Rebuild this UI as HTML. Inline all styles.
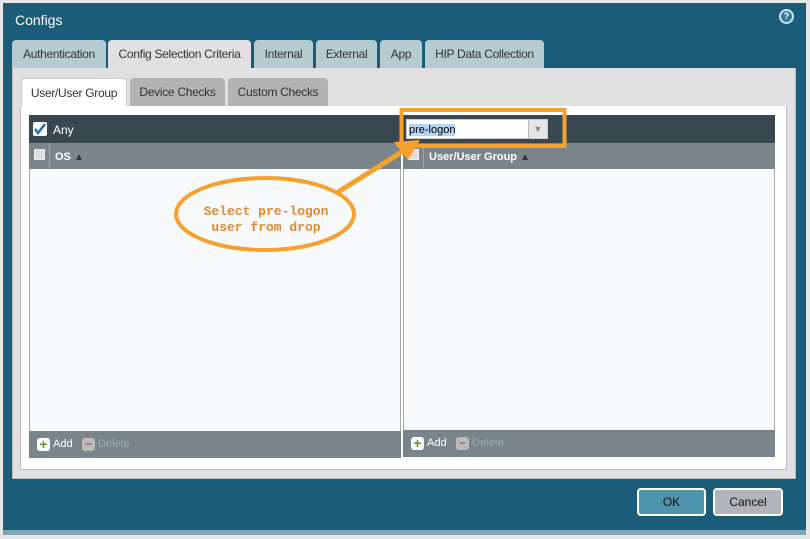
<!DOCTYPE html>
<html><head><style>
*{margin:0;padding:0;box-sizing:border-box}
body{width:810px;height:539px;background:#e6e6e6;font-family:"Liberation Sans",sans-serif;position:relative;overflow:hidden}
.a{position:absolute}
.tab{position:absolute;top:40px;height:28px;background:#b6cbd0;border-radius:4px 4px 0 0;font-size:12px;color:#333;text-align:center;line-height:28px;letter-spacing:-0.3px}
.st{position:absolute;top:78px;height:28px;background:#b3b3b3;border-radius:4px 4px 0 0;font-size:12px;color:#333;text-align:center;line-height:28px;letter-spacing:-0.3px}
.cb{position:absolute;width:11px;height:11px;background:#ddd;border:1px solid #eee}
.ft{font-size:11px;color:#fff}
</style></head><body>
<div class="a" style="left:3px;top:3px;width:803px;height:528px;background:#1b5d79"></div>
<div class="a" style="left:3px;top:530px;width:803px;height:5px;background:#7fa6b6"></div>
<div class="a" style="left:15px;top:12px;color:#fff;font-size:14px">Configs</div>
<div class="a" style="left:779px;top:9px;width:15px;height:15px;border-radius:50%;background:#2a7ab0;border:2px solid #cfe3ee;color:#fff;font-size:9px;font-weight:bold;text-align:center;line-height:11px">?</div>
<div class="tab" style="left:12px;width:94px">Authentication</div>
<div class="tab" style="left:108px;width:143px;background:#e0e0e0">Config Selection Criteria</div>
<div class="tab" style="left:254px;width:59px">Internal</div>
<div class="tab" style="left:316px;width:61px">External</div>
<div class="tab" style="left:380px;width:42px">App</div>
<div class="tab" style="left:425px;width:119px">HIP Data Collection</div>
<div class="a" style="left:12px;top:68px;width:784px;height:411px;background:#e0e0e0;border:1px solid #bbb;border-top:none"></div>
<div class="st" style="left:21px;width:106px;background:#fff;border:1px solid #ccc;border-bottom:none">User/User Group</div>
<div class="st" style="left:130px;width:95px">Device Checks</div>
<div class="st" style="left:228px;width:100px">Custom Checks</div>
<div class="a" style="left:20px;top:106px;width:767px;height:364px;background:#fff;border:1px solid #bbb;border-top:none"></div>
<div class="a" style="left:29px;top:115px;width:746px;height:28px;background:#39474f"></div>
<div class="a" style="left:33px;top:122px;width:14px;height:14px;background:#fff;border-radius:2px"><svg width="14" height="14"><path d="M2 7l3 4 7-9" stroke="#1d6fb0" stroke-width="2.5" fill="none"/></svg></div>
<div class="a ft" style="left:53px;top:123px;font-size:12px">Any</div>
<div class="a" style="left:29px;top:143px;width:372px;height:315px;background:#f8f9fb;border:1px solid #aaa"></div>
<div class="a" style="left:29px;top:143px;width:372px;height:26px;background:#7a858b"></div>
<div class="cb" style="left:34px;top:149px"></div>
<div class="a" style="left:49px;top:143px;width:1px;height:26px;background:#9aa"></div>
<div class="a ft" style="left:55px;top:151px;font-weight:bold">OS <span style="color:#333;font-size:10px">▲</span></div>
<div class="a" style="left:29px;top:431px;width:372px;height:27px;background:#7a858b"></div>
<div class="a" style="left:403px;top:143px;width:372px;height:314px;background:#f8f9fb;border:1px solid #aaa"></div>
<div class="a" style="left:403px;top:143px;width:372px;height:26px;background:#7a858b"></div>
<div class="cb" style="left:408px;top:149px"></div>
<div class="a" style="left:423px;top:143px;width:1px;height:26px;background:#9aa"></div>
<div class="a ft" style="left:429px;top:151px;font-weight:bold">User/User Group <span style="color:#333;font-size:10px">▲</span></div>
<div class="a" style="left:403px;top:430px;width:372px;height:27px;background:#7a858b"></div>
<div class="a" style="left:406px;top:119px;width:142px;height:20px;background:#fff;border:1px solid #ccc"></div>
<div class="a" style="left:409px;top:124px;font-size:11px;background:#b4d5f5;color:#000;line-height:12px">pre-logon</div>
<div class="a" style="left:528px;top:120px;width:19px;height:18px;background:#e6e6e6;border-left:1px solid #bbb;color:#888;font-size:9px;text-align:center;line-height:18px">▼</div>
<div class="a" style="left:37px;top:438px;width:13px;height:13px;background:#fff;border-radius:3px;color:#5a9a20;font-weight:bold;font-size:14px;line-height:12px;text-align:center">+</div>
<div class="a ft" style="left:53px;top:438px">Add</div>
<div class="a" style="left:82px;top:438px;width:13px;height:13px;background:#bbb;border-radius:3px;color:#7a3a3a;font-size:12px;line-height:12px;text-align:center">−</div>
<div class="a" style="left:98px;top:438px;font-size:11px;color:#9aa">Delete</div>
<div class="a" style="left:411px;top:437px;width:13px;height:13px;background:#fff;border-radius:3px;color:#5a9a20;font-weight:bold;font-size:14px;line-height:12px;text-align:center">+</div>
<div class="a ft" style="left:427px;top:437px">Add</div>
<div class="a" style="left:456px;top:437px;width:13px;height:13px;background:#bbb;border-radius:3px;color:#7a3a3a;font-size:12px;line-height:12px;text-align:center">−</div>
<div class="a" style="left:472px;top:437px;font-size:11px;color:#9aa">Delete</div>
<div class="a" style="left:637px;top:488px;width:69px;height:28px;background:#4f93ad;border:2px solid #fff;border-radius:4px;font-size:12px;text-align:center;line-height:24px;color:#111">OK</div>
<div class="a" style="left:713px;top:488px;width:70px;height:28px;background:#b1b5b9;border:2px solid #fff;border-radius:4px;font-size:12px;text-align:center;line-height:24px;color:#111">Cancel</div>
<svg class="a" style="left:0;top:0" width="810" height="539">
<rect x="401.5" y="110" width="163" height="36" fill="none" stroke="#f6a02e" stroke-width="4"/>
<line x1="338" y1="192" x2="405" y2="150" stroke="#f6a02e" stroke-width="5"/>
<polygon points="420,140 394,142 408,160" fill="#f6a02e"/>
<ellipse cx="265" cy="214" rx="89" ry="36" fill="none" stroke="#f6a02e" stroke-width="4"/>
<text x="266" y="215" font-family="Liberation Mono" font-size="13" font-weight="bold" fill="#e38a2a" text-anchor="middle">Select pre-logon</text>
<text x="266" y="231" font-family="Liberation Mono" font-size="13" font-weight="bold" fill="#e38a2a" text-anchor="middle">user from drop</text>
</svg>
</body></html>
